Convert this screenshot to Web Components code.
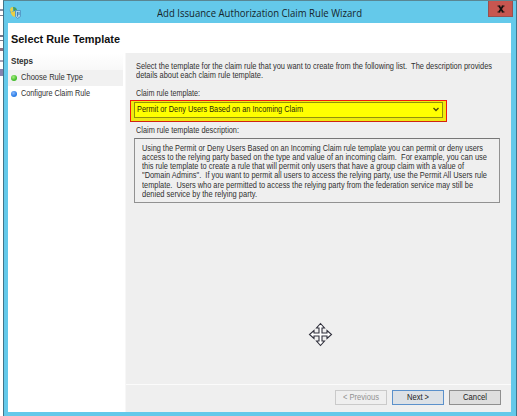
<!DOCTYPE html>
<html lang="en"><head><meta charset="utf-8"><title>Add Issuance Authorization Claim Rule Wizard</title>
<style>
html,body{margin:0;width:517px;height:416px;overflow:hidden}
body{font:9px/9.2px "Liberation Sans",Arial,sans-serif;color:#303030;background:#fff}
</style></head><body>
<claim-wizard></claim-wizard>
<script>
const attach=(el,html)=>{const t=document.createElement('template');t.innerHTML=html;el.attachShadow({mode:'open'}).append(t.content.cloneNode(true));};

// One line of text, scaled to fill the width given in "w".
customElements.define('text-line',class extends HTMLElement{
  connectedCallback(){
    attach(this,`<style>:host{display:block;white-space:pre}span{display:block;width:max-content;transform-origin:0 50%}</style><span><slot></slot></span>`);
    const s=this.shadowRoot.querySelector('span'),w=+this.getAttribute('w');
    const natural=s.getBoundingClientRect().width;
    s.style.transform=`scaleX(${w/natural})`;
    s.style.marginRight=(w-natural)+'px';
    this.style.width=w+'px';
  }
});

customElements.define('title-bar',class extends HTMLElement{
  connectedCallback(){attach(this,`<style>
  :host{display:grid;grid-template-columns:153px 1fr 25px;height:22px;background:#64c9ea;padding-right:3px;color:#15252c;font:11.4px/24px "Open Sans","Noto Sans",sans-serif}
  .ico{margin:5px 0 0 5px}
  .x{height:16px;background:#c75650;border:solid #98504f;border-width:0 1px 1px;box-sizing:border-box;display:grid;place-items:center}
  </style>
  <svg class="ico" width="13" height="14" viewBox="0 0 13 14"><circle cx="4.3" cy="4.5" r="3.6" fill="#4fa3cf"/><path d="M1 4Q1 1 4 1L4 5 2 6.5Z" fill="#e7d24c"/><path d="M4 1Q7 1 8 4L5 5Z" fill="#48a05a"/><path d="M1.5 6.5 6 5 6 11Q3 10.500 1.500 6.500Z" fill="#ecce43"/><path d="M6.500 4.500H11.500V10.500L8.500 12.500 6.500 10.500Z" fill="#a5d4ee" stroke="#4a8fc0" stroke-width=".8"/><path d="M8.500 6V10.500M10 6V9" stroke="#296da4" stroke-width=".8"/></svg>
  <text-line w="205"><slot></slot></text-line>
  <div class="x"><svg width="8" height="8" viewBox="0 0 8 8"><path d="M.5 1H3.300M4.700 1H7.500M.5 7H3.300M4.700 7H7.500" stroke="#15100f"/><path d="M2 1 6 7M6 1 2 7" stroke="#15100f" stroke-width="1.700"/></svg></div>`)}
});

customElements.define('wizard-step',class extends HTMLElement{
  connectedCallback(){attach(this,`<style>
  :host{display:flex;align-items:center;height:16px;padding-left:3px;margin-right:2px;gap:4px}
  :host([current]){background:#f1f1f1}
  i{width:6px;height:6px;border-radius:50%;background:radial-gradient(circle at 40% 35%,#8abaff,#2b7de6 60%)}
  :host([current]) i{background:radial-gradient(circle at 40% 35%,#a8ef80,#43bd2c 60%)}
  </style><i></i><slot></slot>`)}
});

customElements.define('combo-box',class extends HTMLElement{
  connectedCallback(){attach(this,`<style>
  :host{display:block;box-sizing:border-box;width:317px;height:22px;border:1px solid #f3180c;border-bottom-color:#cf2411;background:#eeea10;padding:1px 3px 3px 3px}
  div{box-sizing:border-box;height:16px;border:1px solid #91910a;background:#ff0;display:flex;align-items:center;justify-content:space-between;padding:0 3px 0 2px;color:#2b2b08}
  </style><div><slot></slot><svg width="6" height="5" viewBox="0 0 6 5"><path d="M.5 1 3 3.500 5.500 1" fill="none" stroke="#4c4c06" stroke-width="1.400"/></svg></div>`)}
});

customElements.define('push-button',class extends HTMLElement{
  connectedCallback(){attach(this,`<style>
  :host{display:grid;place-items:center;box-sizing:border-box;width:52px;height:15px;border:1px solid #8f8f8f;background:#dedede;color:#222}
  :host([default]){border-color:#5b91cb;background:#dce1e6}
  :host([disabled]){border-color:#cacaca;background:#efefef;color:#919191}
  </style><slot></slot>`)}
});

customElements.define('claim-wizard',class extends HTMLElement{
  connectedCallback(){attach(this,`<style>
  :host{display:block;position:relative;width:517px;height:416px}
  .edge{position:absolute;left:0;top:0;width:3px;height:80px;background:linear-gradient(#0000 9px,#8990a4 9px 11px,#0000 11px 15px,#777e92 15px 16px,#0000 16px 35px,#72778a 35px 37px,#0000 37px 40px,#777c8d 40px 41px,#0000 41px 48px,#8a7081 48px 51px,#0000 51px 60px,#a5a2b8 60px 62px,#0000 62px 69px,#8582ae 69px 76px,#0000 76px)}
  .win{box-sizing:border-box;width:514px;height:416px;margin-left:3px;border:solid #41758a;border-width:1px 1px 0;border-top-color:#598693;background:#64c9ea;display:grid;grid-template:22px 389px 4px / 512px}
  .client{margin:0 5px 0 4px;display:grid;grid-template:30px 359px / 503px;background:#fff}
  h1{margin:0;padding:10px 0 0 3px;font:bold 11px/12px "Liberation Sans",sans-serif;color:#111}
  .body{display:grid;grid-template-columns:117px 386px;min-height:0}
  nav .hd{height:17px;padding:4px 0 0 3px;margin-right:2px;box-sizing:border-box;font-weight:bold;background:linear-gradient(#fff,#f8f8f8)}
  main{border-left:1px solid #f7f7f7;background:#efefef;display:grid;grid-template-rows:1fr 28px}
  .content{padding:9px 11px 0 4px}
  .lab{margin-left:6px}
  .desc{box-sizing:border-box;width:366px;height:65px;border:1px solid #919191;border-top-color:#777;margin:3px 0 0 4px;padding:5px 0 0 7px}
  footer{border-top:1px solid #fbfbfb;display:flex;justify-content:flex-end;gap:5px;padding:5px 10px 0 0}
  .cur{position:absolute;left:308px;top:322px}
  </style>
  <div class="edge"></div>
  <div class="win"><title-bar>Add Issuance Authorization Claim Rule Wizard</title-bar>
  <div class="client"><h1><text-line w="109">Select Rule Template</text-line></h1>
  <div class="body"><nav><div class="hd"><text-line w="22">Steps</text-line></div>
   <wizard-step current><text-line w="62">Choose Rule Type</text-line></wizard-step>
   <wizard-step><text-line w="69">Configure Claim Rule</text-line></wizard-step></nav>
  <main><section class="content">
   <div class="lab"><text-line w="356">Select the template for the claim rule that you want to create from the following list.  The description provides</text-line>
   <text-line w="127">details about each claim rule template.</text-line>
   <text-line w="64" style="margin-top:9px">Claim rule template:</text-line></div>
   <combo-box style="margin-top:1px"><text-line w="166">Permit or Deny Users Based on an Incoming Claim</text-line></combo-box>
   <div class="lab" style="margin-top:4px"><text-line w="103">Claim rule template description:</text-line></div>
   <div class="desc"><text-line w="341">Using the Permit or Deny Users Based on an Incoming Claim rule template you can permit or deny users</text-line>
   <text-line w="345">access to the relying party based on the type and value of an incoming claim.  For example, you can use</text-line>
   <text-line w="322">this rule template to create a rule that will permit only users that have a group claim with a value of</text-line>
   <text-line w="345">"Domain Admins".  If you want to permit all users to access the relying party, use the Permit All Users rule</text-line>
   <text-line w="331">template.  Users who are permitted to access the relying party from the federation service may still be</text-line>
   <text-line w="115">denied service by the relying party.</text-line></div>
  </section>
  <footer><push-button disabled><text-line w="36">&lt; Previous</text-line></push-button><push-button default><text-line w="22">Next &gt;</text-line></push-button><push-button><text-line w="24">Cancel</text-line></push-button></footer></main></div></div></div>
  <svg class="cur" width="25" height="25" viewBox="0 0 25 25"><path d="M12.500 1.500 16.500 6H14V11H19V8.500L23.500 12.500 19 16.500V14H14V19H16.500L12.500 23.500 8.500 19H11V14H6V16.500L1.500 12.500 6 8.500V11H11V6H8.500Z" fill="#fff" stroke="#30303c" stroke-width="1.100"/></svg>`)}
});
</script></body></html>
